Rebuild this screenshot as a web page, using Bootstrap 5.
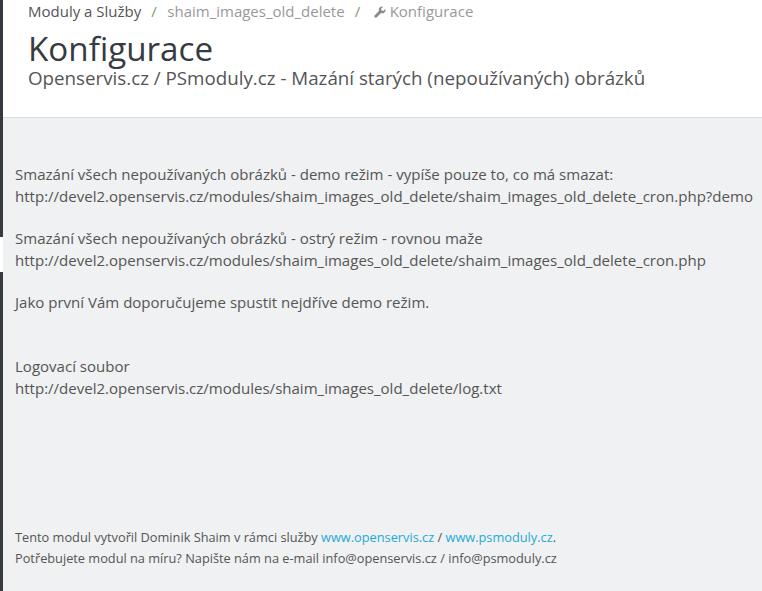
<!DOCTYPE html>
<html lang="cs">
<head>
<meta charset="utf-8">
<title>Konfigurace</title>
<link href="https://cdn.jsdelivr.net/npm/bootstrap@5.3.0/dist/css/bootstrap.min.css" rel="stylesheet">
<style>
html,body{height:100%;}
body{font-family:"Open Sans",sans-serif;background:#eff1f2;color:#555;overflow:hidden;}
.shell{height:591px;display:flex;}
.rail{width:3px;flex:none;display:flex;flex-direction:column;}
.rail-top{height:237px;background:#363a41;}
.rail-gap{height:35px;background:#fff;}
.rail-bottom{flex:1;background:#363a41;}
.main{flex:1;min-width:0;display:flex;flex-direction:column;}
.head{height:118px;background:#fff;border-bottom:1px solid #d9dcde;padding-left:25px;}
.crumbs{height:22px;font-size:15px;line-height:22px;color:#999;}
.crumbs .breadcrumb-item+.breadcrumb-item::before{color:#7b9a6f;padding-right:10.5px;}
.crumbs .breadcrumb-item+.breadcrumb-item{padding-left:10px;}
.crumbs .first{color:#555;}
.crumbs svg{width:12px;height:12px;vertical-align:-1px;margin:0 4px 0 3px;}
.title{font-size:33.2px;line-height:36px;font-weight:400;color:#363a41;margin:9px 0 0;}
.sub{font-size:18.75px;line-height:20px;color:#555;margin:1px 0 0;}
.content{flex:1;padding:45px 0 0 12px;font-size:15.04px;line-height:22px;display:flex;flex-direction:column;white-space:nowrap;}
.block{margin:0 0 20px;}
.spacer-top{margin-top:22px;}
.foot{margin-top:auto;padding-bottom:22px;font-size:12.77px;line-height:21px;}
.foot a{color:#25a9d7;text-decoration:none;}
</style>
</head>
<body>
<div class="shell">
  <div class="rail"><div class="rail-top"></div><div class="rail-gap"></div><div class="rail-bottom"></div></div>
  <div class="main">
    <header class="head">
      <ol class="breadcrumb crumbs mb-0">
        <li class="breadcrumb-item first">Moduly a Služby</li>
        <li class="breadcrumb-item">shaim_images_old_delete</li>
        <li class="breadcrumb-item"><svg viewBox="0 0 24 24" aria-hidden="true"><path fill="#8a8a8a" d="M22.7 6.2l-4 4-3.6-1-1-3.6 4-4a6.5 6.5 0 0 0-8.2 8.3L1.6 18.3a2.9 2.9 0 0 0 4.1 4.1l8.4-8.3a6.5 6.5 0 0 0 8.6-7.9z"/></svg>Konfigurace</li>
      </ol>
      <h1 class="title">Konfigurace</h1>
      <p class="sub">Openservis.cz / PSmoduly.cz - Mazání starých (nepoužívaných) obrázků</p>
    </header>
    <main class="content">
      <p class="block">Smazání všech nepoužívaných obrázků - demo režim - vypíše pouze to, co má smazat:<br>http://devel2.openservis.cz/modules/shaim_images_old_delete/shaim_images_old_delete_cron.php?demo</p>
      <p class="block">Smazání všech nepoužívaných obrázků - ostrý režim - rovnou maže<br>http://devel2.openservis.cz/modules/shaim_images_old_delete/shaim_images_old_delete_cron.php</p>
      <p class="block">Jako první Vám doporučujeme spustit nejdříve demo režim.</p>
      <p class="block spacer-top">Logovací soubor<br>http://devel2.openservis.cz/modules/shaim_images_old_delete/log.txt</p>
      <div class="foot">Tento modul vytvořil Dominik Shaim v rámci služby <a href="#">www.openservis.cz</a> / <a href="#">www.psmoduly.cz</a>.<br>Potřebujete modul na míru? Napište nám na e-mail info@openservis.cz / info@psmoduly.cz</div>
    </main>
  </div>
</div>
<script src="https://cdn.jsdelivr.net/npm/bootstrap@5.3.0/dist/js/bootstrap.bundle.min.js"></script>
</body>
</html>
